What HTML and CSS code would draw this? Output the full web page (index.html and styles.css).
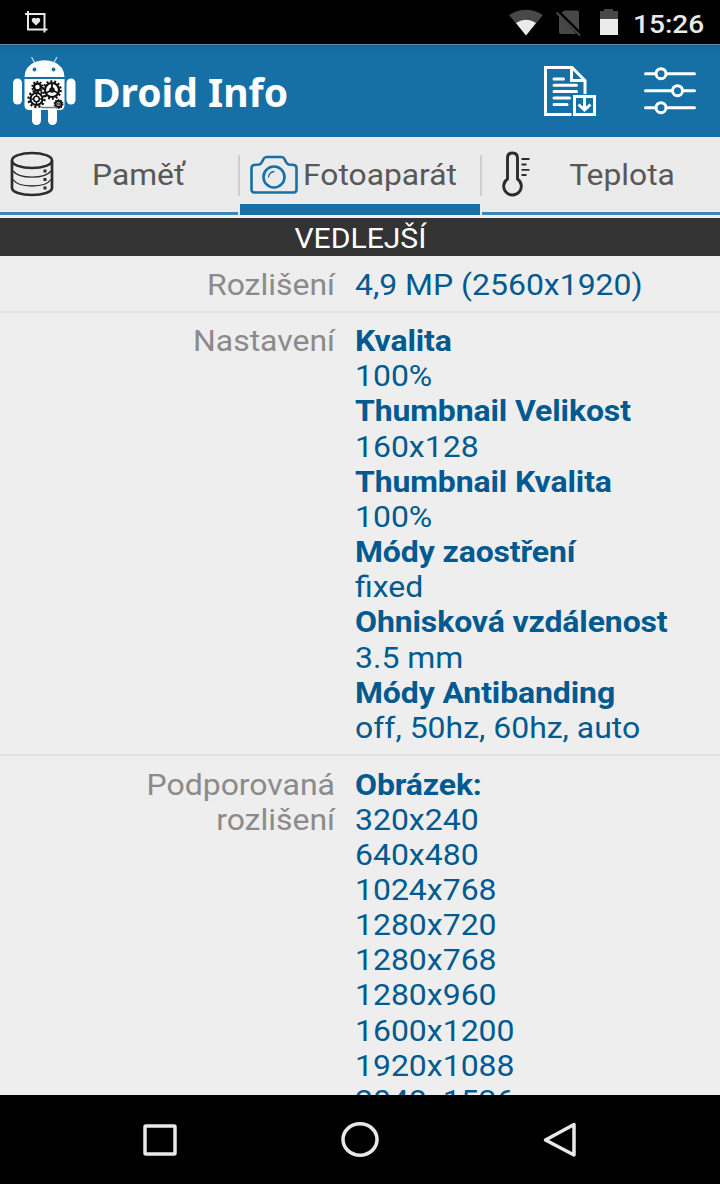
FILE: index.html
```html
<!DOCTYPE html>
<html lang="cs">
<head>
    <meta charset="UTF-8">
    <meta name="viewport" content="width=device-width, initial-scale=1.0">
    <title>Droid Info</title>
    <link rel="stylesheet" href="styles.css">
</head>
<body>
    <div class="screen">
        <div class="status-bar">
            <svg class="notification" width="23" height="22" viewBox="0 0 23 22">
                <path d="M3 0V18.500H22.500M0 3H19.500V21.500" fill="none" stroke="#e8e8e8" stroke-width="2"/>
                <path d="M11 14.500L7 10.500Q6 7.200 9 6.800L11 7.500L13 6.800Q16 7.200 15 10.500Z" fill="#e8e8e8"/>
            </svg>
            <svg class="wifi" width="36" height="28" viewBox="0 0 36 28">
                <path d="M1 7Q18 -3.500 35 7L18 27.500Z" fill="#484848"/>
                <path d="M8 15Q18 8.500 28 15L18 27.500Z" fill="#ebebeb"/>
            </svg>
            <svg class="no-sim" width="28" height="28" viewBox="0 0 28 28">
                <path d="M10.500 2.500H23Q25 2.500 25 4.500V22L7.500 4.500ZM5 7.500L22.500 26H7Q5 26 5 24Z" fill="#484848"/>
                <path d="M2.500 4.500L26 27.500" stroke="#484848" stroke-width="2"/>
            </svg>
            <svg class="battery" width="20" height="28" viewBox="0 0 20 28">
                <path d="M1 3H5V1H14V3H19V12H1Z" fill="#484848"/>
                <path d="M1 11H19V27H1Z" fill="#ebebeb"/>
            </svg>
            <span class="clock">15:26</span>
        </div>

        <header class="app-bar">
            <svg class="logo" width="64" height="72" viewBox="0 0 64 72">
                <g fill="#fff">
                    <path d="M11.500 22Q12 11 22 7Q31.500 3.500 41 7Q51 11 51.500 22Z"/>
                    <path d="M11.500 24H51.500V50Q51.500 55 47 55H16Q11.500 55 11.500 50Z"/>
                    <rect x="0" y="23.500" width="9" height="26" rx="4.500"/>
                    <rect x="53.500" y="23.500" width="9" height="26" rx="4.500"/>
                    <rect x="19" y="45" width="9" height="25" rx="4.500"/>
                    <rect x="35" y="45" width="9" height="25" rx="4.500"/>
                </g>
                <path d="M21.500 7.500L18.500 2M41 7.500L44 2" stroke="#b9d8eb" stroke-width="1.300"/>
                <circle cx="21.500" cy="14.500" r="1.900" fill="#1670a6"/>
                <circle cx="40.500" cy="14.500" r="1.900" fill="#1670a6"/>
                <g fill="none" stroke="#111">
                    <circle cx="24.500" cy="32" r="3.500" stroke-width="2.500"/>
                    <circle cx="24.500" cy="32" r="5.200" stroke-width="2" stroke-dasharray="1.700 1.570"/>
                    <circle cx="39" cy="35" r="7" stroke-width="2.200"/>
                    <circle cx="39" cy="35" r="8.700" stroke-width="2.200" stroke-dasharray="2 1.900"/>
                    <path d="M39 28V35L33 38M39 35L45 38" stroke-width="1.800"/>
                    <circle cx="39" cy="35" r="2" stroke-width="1.600"/>
                    <circle cx="23.500" cy="44" r="6" stroke-width="2"/>
                    <circle cx="23.500" cy="44" r="8" stroke-width="2.300" stroke-dasharray="2.200 1.990"/>
                    <circle cx="23.500" cy="44" r="2.800" stroke-width="1.500"/>
                    <path d="M23.500 38V41M23.500 47V50M17.500 44H20.500M26.500 44H29.500" stroke-width="1.500"/>
                    <circle cx="45.500" cy="49" r="3" stroke-width="2"/>
                    <circle cx="45.500" cy="49" r="4.200" stroke-width="1.500" stroke-dasharray="1.400 1.240"/>
                    <circle cx="45.500" cy="49" r="1" stroke-width="1"/>
                    <path d="M28 52.500H44" stroke="#777" stroke-width="1.500"/>
                </g>
            </svg>
            <h1>Droid Info</h1>
            <svg class="report" width="54" height="52" viewBox="0 0 54 52" fill="none" stroke="#fff" stroke-width="3">
                <path d="M28.500 49.500H2.500V2.500H29L42 15.500V29"/>
                <path d="M28.500 3V15.500H42"/>
                <path d="M11 14H20.500M11 20.200H33.500M11 26.500H33.500M11 33H26.500M11 39.500H24" stroke-linecap="round"/>
                <path d="M31.500 31.500H51.500V49.500H31.500Z"/>
                <path d="M41.500 33V44M35.500 39.500L41.500 45L47.500 39.500"/>
            </svg>
            <svg class="settings" width="54" height="50" viewBox="0 0 54 50" fill="none" stroke="#fff" stroke-width="3" stroke-linecap="round">
                <path d="M2.500 7.700H12.500M24 7.700H51.500M2.500 24.700H29M40 24.700H51.500M2.500 41.700H12.500M24 41.700H51.500"/>
                <circle cx="18" cy="7.700" r="5"/>
                <circle cx="34.500" cy="24.700" r="5"/>
                <circle cx="18" cy="41.700" r="5"/>
            </svg>
        </header>

        <nav class="tabs">
            <div class="tab">
                <svg class="tab-icon" width="44" height="46" viewBox="0 0 44 46" fill="none" stroke="#2d2d2d">
                    <path d="M2 9.500V37C2 41 11 44 22 44S42 41 42 37V9.500" stroke-width="2.700"/>
                    <ellipse cx="22" cy="9.500" rx="20" ry="7.500" stroke-width="2.500"/>
                    <path d="M3 20C6 24 13 26.200 22 26.200S38 24 41 20M3 28.500C6 33 13 35 22 35S38 33 41 28.500" stroke-width="1.300"/>
                    <path d="M33.500 20H36.500M33.500 28.500H36.500M33.500 37H36.500" stroke-width="3"/>
                </svg>
                <span class="tab-name">Paměť</span>
            </div>
            <div class="tab active">
                <svg class="tab-icon" width="48" height="40" viewBox="0 0 48 40" fill="none" stroke="#1670a6" stroke-width="2.600">
                    <path d="M1.500 13Q1.500 10.500 4 10L9 9.500Q11 9 12 7L13.500 4Q14.500 2 16.500 2H31.500Q33.500 2 34.500 4L36 7Q37 9 39 9.500L44 10Q46.500 10.500 46.500 13V34.500Q46.500 37.500 43.500 37.500H4.500Q1.500 37.500 1.500 34.500Z"/>
                    <circle cx="24" cy="22" r="10.500"/>
                    <path d="M18.500 22.500Q19 17 24.500 16.500" stroke-width="1.300"/>
                </svg>
                <span class="tab-name">Fotoaparát</span>
            </div>
            <div class="tab temperature">
                <svg class="tab-icon" width="28" height="46" viewBox="0 0 28 46" fill="none" stroke="#2d2d2d">
                    <path d="M5.500 28V7Q5.500 2 10.500 2T15.500 7V28A8.800 8.800 0 1 1 5.500 28Z" stroke-width="2.900"/>
                    <path d="M19.500 8H27.500M19.500 13.500H24.500M19.500 18.800H27.500M19.500 24H24.500" stroke-width="1.800"/>
                </svg>
                <span class="tab-name">Teplota</span>
            </div>
        </nav>

        <main class="content">
            <h2><span>VEDLEJŠÍ</span></h2>
            <div class="row">
                <div class="label">Rozlišení</div>
                <div class="value">4,9 MP (2560x1920)</div>
            </div>
            <div class="row">
                <div class="label">Nastavení</div>
                <div class="value">
                    <b>Kvalita</b><br>
                    100%<br>
                    <b>Thumbnail Velikost</b><br>
                    160x128<br>
                    <b>Thumbnail Kvalita</b><br>
                    100%<br>
                    <b>Módy zaostření</b><br>
                    fixed<br>
                    <b>Ohnisková vzdálenost</b><br>
                    3.5 mm<br>
                    <b>Módy Antibanding</b><br>
                    off, 50hz, 60hz, auto
                </div>
            </div>
            <div class="row">
                <div class="label">Podporovaná<br>rozlišení</div>
                <div class="value">
                    <b>Obrázek:</b><br>
                    320x240<br>
                    640x480<br>
                    1024x768<br>
                    1280x720<br>
                    1280x768<br>
                    1280x960<br>
                    1600x1200<br>
                    1920x1088<br>
                    2048x1536
                </div>
            </div>
        </main>

        <footer class="nav-bar">
            <svg width="36" height="36" viewBox="0 0 36 36"><rect x="3" y="4" width="30" height="28" rx="1"/></svg>
            <svg width="40" height="36" viewBox="0 0 40 36"><ellipse cx="20" cy="17.500" rx="17" ry="15.700"/></svg>
            <svg width="36" height="36" viewBox="0 0 36 36"><path d="M32 2.500V33L3.500 18Z"/></svg>
        </footer>
    </div>
</body>
</html>
```

FILE: styles.css
```css
body {
    margin: 0;
    font-family: Roboto, sans-serif;
    background-color: #eeeeee;
}
.screen {
    display: flex;
    flex-direction: column;
    width: 720px;
    height: 1184px;
    overflow: hidden;
}
svg {
    display: block;
    flex: none;
}

/* Status bar */
.status-bar {
    display: flex;
    align-items: center;
    height: 44px;
    padding: 0 16px 0 25px;
    box-sizing: border-box;
    background-color: #000;
}
.notification {
    margin-right: auto;
}
.no-sim {
    margin: 0 17px 0 10px;
}
.clock {
    width: 71px;
    margin: 3px 0 0 14px;
    color: #e8e8e8;
    font-size: 26.5px;
    font-weight: 500;
    line-height: 41px;
    white-space: nowrap;
    transform: scaleX(1.06);
    transform-origin: left;
}

/* Title bar */
.app-bar {
    display: flex;
    align-items: center;
    height: 93px;
    padding: 0 23px 0 13px;
    box-sizing: border-box;
    background: linear-gradient(#15638f, #1670a6 6px);
    border-top: 1px solid #5890b0;
}
.app-bar h1 {
    flex: 1;
    margin: 1px 0 0 15px;
    color: #fff;
    font-family: "Noto Sans", sans-serif;
    font-size: 39px;
    line-height: 54px;
}
.settings {
    margin-left: 46px;
}

/* Tabs */
.tabs {
    display: grid;
    grid-template-columns: 238px 240px 238px;
    gap: 2px;
    height: 78px;
    background: linear-gradient(#cfcfcf, #cfcfcf) 238px 18px / 2px 41px no-repeat,
                linear-gradient(#cfcfcf, #cfcfcf) 480px 18px / 2px 41px no-repeat,
                #ebebeb;
}
.tab {
    display: flex;
    align-items: center;
    box-sizing: border-box;
    padding: 0 15px 2px 10px;
    border-bottom: 3px solid #3b88b6;
    color: #585858;
    font-size: 30px;
}
/* Labels are slightly wider than the plain Roboto glyphs */
.tab-name {
    flex: 1;
    margin-top: 2px;
    text-align: center;
    transform: scaleX(1.06);
}
.tab.active {
    padding: 0 18px 0 10px;
    border-bottom: 11px solid #1670a6;
}
.tab.active .tab-icon,
.tab.active .tab-name {
    margin-top: 8px;
}
.tab.temperature {
    padding: 0 6px 2px 20px;
}

/* Info table */
.content {
    flex: 1;
    min-height: 0;
    overflow: hidden;
    padding-top: 3px;
    font-size: 30px;
    line-height: 35.16px;
}
.content h2 {
    margin: 0;
    height: 38px;
    background-color: #333;
    color: #fff;
    font-size: 28px;
    font-weight: normal;
    line-height: 41px;
    text-align: center;
}
.content h2 span {
    display: inline-block;
    transform: scaleX(1.075);
}
.row {
    display: grid;
    grid-template-columns: 335px 1fr;
    column-gap: 20px;
    padding: 10.5px 0 9px;
    border-bottom: 2px solid #e1e1e1;
}
.label {
    color: #8b8b8b;
    text-align: right;
    transform: scaleX(1.065);
    transform-origin: right;
}
.value {
    width: 335px;
    color: #005a90;
    transform: scaleX(1.065);
    transform-origin: left;
}
.value b {
    letter-spacing: -0.1px;
}

/* Bottom navigation */
.nav-bar {
    display: flex;
    justify-content: space-between;
    align-items: center;
    height: 89px;
    padding: 0 142px;
    box-sizing: border-box;
    background-color: #000;
}
.nav-bar svg {
    fill: none;
    stroke: #e8e8e8;
    stroke-width: 3.5;
    stroke-linejoin: round;
}
```
